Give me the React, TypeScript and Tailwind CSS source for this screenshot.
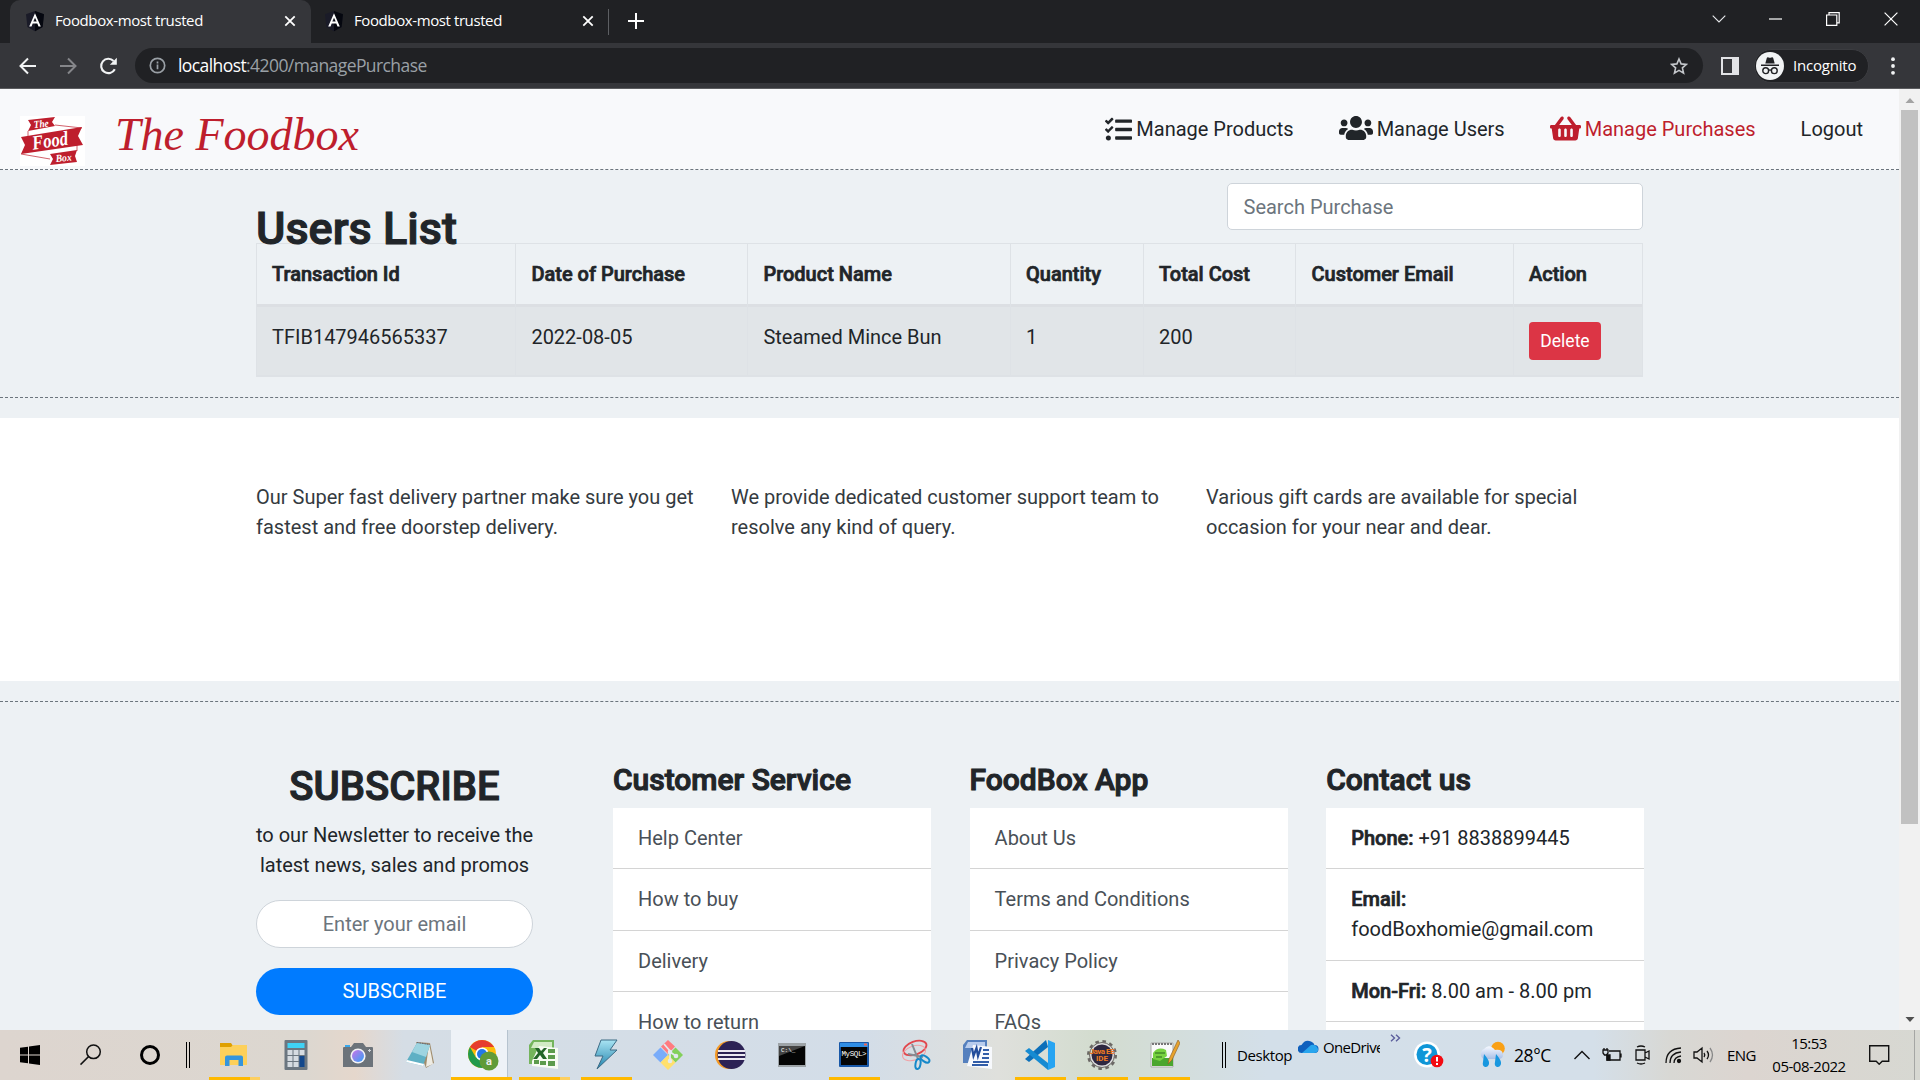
import React from "react";
import { FaTasks, FaUsers, FaShoppingBasket } from "react-icons/fa";

const navCls = "flex items-center whitespace-nowrap text-[20px] leading-[30px]";

function Tab({ active }: { active?: boolean }) {
  return (
    <div className={active
      ? "relative ml-[10px] flex h-[43px] w-[301px] shrink-0 items-center rounded-t-[10px] bg-[#35363a] pb-[2px] pl-[15px] pr-[15px]"
      : "relative flex h-[43px] w-[297px] shrink-0 items-center pb-[2px] pl-[13px] pr-[14px]"}>
      <svg width="20" height="22" viewBox="0 0 20 22" className="shrink-0">
        <path d="M10 1 19 4.3 17.6 17 10 21.3 2.4 17 1 4.3z" fill="#1a1b28" />
        <path d="M10 1 19 4.3 17.6 17 10 21.3z" fill="#05070f" />
        <path d="M10 3.2 4.2 16.4h2.3l1.2-2.9h4.6l1.2 2.9h2.3zm0 4.5 1.7 3.9H8.3z" fill="#fff" />
      </svg>
      <span className="ml-[10px] whitespace-nowrap font-['Open_Sans','Noto_Sans',sans-serif] text-[15px] tracking-[-0.4px] text-white">Foodbox-most trusted</span>
      <svg width="12" height="12" viewBox="0 0 12 12" className="ml-auto" stroke="#fff" strokeWidth="1.8"><path d="M1.3 1.3l9.4 9.4M10.7 1.3l-9.4 9.4" /></svg>
    </div>
  );
}

function Browser() {
  return (
    <header className="h-[89px] border-b border-[#5b5c5f] bg-[#35363a]">
      <div className="flex h-[43px] items-center bg-[#202124]">
        <Tab active />
        <Tab />
        <div className="h-[26px] w-px bg-[#5d5f63]" />
        <svg width="16" height="16" viewBox="0 0 16 16" className="ml-[19px] mb-[1px]" stroke="#fff" strokeWidth="2"><path d="M8 0v16M0 8h16" /></svg>
        <div className="ml-auto flex items-center pr-[22px] pb-[5px]">
          <svg width="14" height="8" viewBox="0 0 14 8" fill="none" stroke="#e8eaed" strokeWidth="1.1"><path d="M.7.7 7 7 13.3.7" /></svg>
          <svg width="13" height="2" viewBox="0 0 13 2" className="ml-[43px]"><path d="M0 1h13" stroke="#fff" strokeWidth="1.2" /></svg>
          <svg width="14" height="14" viewBox="0 0 14 14" className="ml-[44px]" fill="none" stroke="#fff" strokeWidth="1.2"><path d="M.6 3h10.2v10.4H.6zM3 3V.7h10.2v10.1h-2.4" /></svg>
          <svg width="14" height="14" viewBox="0 0 14 14" className="ml-[44px]" stroke="#fff" strokeWidth="1.2"><path d="M.6.6l12.8 12.8M13.4.6.6 13.4" /></svg>
        </div>
      </div>
      <div className="flex h-[45px] items-center">
        <svg width="18" height="18" viewBox="0 0 18 18" className="ml-[19px]" fill="none" stroke="#f1f3f4" strokeWidth="2"><path d="M17 9H2M9 1.5 1.5 9 9 16.5" /></svg>
        <svg width="18" height="18" viewBox="0 0 18 18" className="ml-[22px]" fill="none" stroke="#85868a" strokeWidth="2"><path d="M1 9h15M9 1.5 16.5 9 9 16.5" /></svg>
        <svg width="19" height="18" viewBox="0 0 19 18" className="ml-[22px]" fill="none" stroke="#f1f3f4" strokeWidth="2.1"><path d="M15.8 12.2A7.2 7.2 0 1 1 14.6 4" /><path d="M17.8.8v7h-7z" fill="#f1f3f4" stroke="none" /></svg>
        <div className="ml-[17px] flex h-[35px] w-[1568px] items-center rounded-full bg-[#202124] pl-[14px] pr-[15px]">
          <svg width="17" height="17" viewBox="0 0 17 17" fill="none" stroke="#9aa0a6" strokeWidth="1.7"><circle cx="8.5" cy="8.5" r="7.2" /><path d="M8.5 7.6v4.7M8.5 4.6v1.8" /></svg>
          <span className="ml-[12px] whitespace-nowrap font-['Open_Sans','Noto_Sans',sans-serif] text-[17.5px] tracking-[-0.58px] text-[#9aa0a6]"><span className="text-white">localhost</span>:4200/managePurchase</span>
          <svg width="18" height="18" viewBox="0 0 24 24" className="ml-auto" fill="none" stroke="#c4c7cb" strokeWidth="2.1"><path d="m12 2.6 2.8 6.6 7.1.6-5.4 4.7 1.6 7L12 17.8l-6.100 3.700 1.600-7L2.100 9.800l7.100-.6z" /></svg>
        </div>
        <div className="ml-[18px] flex h-[18px] w-[18px] border-2 border-[#e2e3e6]"><div className="ml-auto w-[5px] bg-[#e2e3e6]" /></div>
        <div className="ml-[15px] flex h-[34px] w-[115px] items-center rounded-full border border-[#3b3c40] bg-[#202124] pl-px">
          <svg width="28" height="28" viewBox="0 0 28 28"><circle cx="14" cy="14" r="14" fill="#f1f3f4" /><g fill="#202124"><path d="M9.300 11.500 10.800 6c.3-.9 1-.9 1.700-.6 1 .4 2 .4 3 0 .7-.3 1.400-.3 1.700.6l1.500 5.500zM5 12.500h18v1.500H5z" /></g><g fill="none" stroke="#202124" strokeWidth="1.400"><circle cx="9.700" cy="18.700" r="2.900" /><circle cx="18.300" cy="18.700" r="2.900" /><path d="M12.600 18.300q1.400-.9 2.800 0" /></g></svg>
          <span className="mb-[1px] ml-[9px] font-['Open_Sans',sans-serif] text-[15px] tracking-[-0.2px] text-white">Incognito</span>
        </div>
        <svg width="4" height="18" viewBox="0 0 4 18" className="ml-[22px]" fill="#f1f3f4"><circle cx="2" cy="2.200" r="1.900" /><circle cx="2" cy="9" r="1.900" /><circle cx="2" cy="15.800" r="1.900" /></svg>
      </div>
    </header>
  );
}

function Logo() {
  return (
    <svg width="65" height="50" viewBox="0 0 65 50">
      <rect width="65" height="50" fill="#fff" />
      <path d="M8 4 35 1l-3 5 3 4L8 15l3-6zM1 21 62 11l-4 9 5 9L1 38l4-9zM30 38l27-4-2 6 2 6-27 3 3-6z" fill="#be1e2d" />
      <path d="M8 15v5M35 9l27 3M1 38l29 5M57 29v6" stroke="#be1e2d" strokeWidth=".7" />
      <g fill="#fff" fontFamily="Liberation Serif, serif" fontStyle="italic" fontWeight="bold">
        <text x="14" y="12" fontSize="10.500" textLength="15" lengthAdjust="spacingAndGlyphs" transform="rotate(-5 14 12)">The</text>
        <text x="13" y="33.500" fontSize="20" textLength="36" lengthAdjust="spacingAndGlyphs" transform="rotate(-8 14 33)">Food</text>
        <text x="36" y="46" fontSize="10.500" textLength="16" lengthAdjust="spacingAndGlyphs" transform="rotate(-5 36 46)">Box</text>
      </g>
    </svg>
  );
}

const columns: [string, string, string][] = [
  ["Transaction Id", "TFIB147946565337", "w-[259.400px]"],
  ["Date of Purchase", "2022-08-05", "w-[232px]"],
  ["Product Name", "Steamed Mince Bun", "w-[262.600px]"],
  ["Quantity", "1", "w-[133px]"],
  ["Total Cost", "200", "w-[152.500px]"],
  ["Customer Email", "", "w-[217.500px]"],
  ["Action", "delete", "w-[129px]"],
];

const bold = "[-webkit-text-stroke:0.7px_#212529] font-medium text-[#212529]";
const heading = "[-webkit-text-stroke:1.1px_#212529] font-medium text-[#212529]";

function LinkColumn({ title, children }: { title: string; children: React.ReactNode }) {
  return (
    <div className="w-[318px]">
      <h4 className={`mb-[10px] h-[36px] whitespace-nowrap text-[30px] leading-[36px] ${heading}`}>{title}</h4>
      <ul className="bg-white text-[20px] leading-[30px]">{children}</ul>
    </div>
  );
}
const item = "border-b border-[#d4d4d4] pt-[15px] pb-[15.250px] pl-[25px]";

function Page() {
  return (
    <main className="flex h-[941px] overflow-hidden bg-[#edf1f4] font-[Roboto,sans-serif] text-[#212529]">
      <div className="w-[1899px] shrink-0">
        <nav className="flex h-[81px] border-b border-dashed border-[#6c757d] bg-[#f8f9fb]">
          <div className="ml-[20px] mt-[27px]"><Logo /></div>
          <svg width="250" height="60" viewBox="0 0 250 60" className="ml-[28px] mt-[15px]"><text x="2" y="46" fontFamily="'Liberation Serif', serif" fontStyle="italic" fontSize="46" fill="#be1e2d" textLength="244" lengthAdjust="spacingAndGlyphs">The Foodbox</text></svg>
          <div className="mt-[25px] ml-auto flex h-[30px] pr-[36px]">
            <a className={navCls}><FaTasks className="mr-[4px] h-[27px] w-[27px]" />Manage Products</a>
            <a className={`${navCls} ml-[45px]`}><FaUsers className="mb-[2px] mr-[4px] h-[34px] w-[34px]" />Manage Users</a>
            <a className={`${navCls} ml-[45px] text-[#be1e2d]`}><FaShoppingBasket className="mb-[2px] mr-[4px] h-[31px] w-[31px]" />Manage Purchases</a>
            <a className={`${navCls} ml-[45px]`}>Logout</a>
          </div>
        </nav>
        <section className="h-[228px] border-b border-dashed border-[#6c757d] px-[256px]">
          <div className="flex h-[73px] w-[1387px] justify-between">
            <h1 className={`mt-[32px] whitespace-nowrap text-[45px] leading-[54px] ${heading}`}>Users List</h1>
            <div className="mt-[13px] flex h-[47px] w-[416px] items-center rounded-[5px] border border-[#ced4da] bg-white pl-[15.500px] text-[20px] text-[#6c757d]">Search Purchase</div>
          </div>
          <div className="flex w-[1387px] border-r border-b-2 border-t border-[#dee2e6]">
            {columns.map(([head, value, width]) => (
              <div key={head} className={`${width} shrink-0 border-l border-[#dee2e6] text-[20px] leading-[30px]`}>
                <div className={`h-[60px] pt-[15px] pl-[15px] ${bold}`}>{head}</div>
                <div className="h-[71px] border-t-[3px] border-[#dcdfe3] bg-[#e1e5e8] pl-[15px] pt-[15px]">
                  {value === "delete" ? <button className="block h-[38px] w-[72px] rounded-[4px] bg-[#dc3545] text-[17.500px] text-white">Delete</button> : value}
                </div>
              </div>
            ))}
          </div>
        </section>
        <section className="mt-[20px] flex h-[263px] gap-[38px] bg-white pl-[256px] pt-[64px] text-[20px] leading-[30px] text-[#343a40]">
          <p className="w-[437px] whitespace-nowrap">Our Super fast delivery partner make sure you get<br />fastest and free doorstep delivery.</p>
          <p className="w-[437px] whitespace-nowrap">We provide dedicated customer support team to<br />resolve any kind of query.</p>
          <p className="w-[437px] whitespace-nowrap">Various gift cards are available for special<br />occasion for your near and dear.</p>
        </section>
        <div className="h-[21px] border-b border-dashed border-[#6c757d]" />
        <footer className="flex pl-[256px] pt-[60px]">
          <div className="mr-[80px] w-[277px] text-center text-[20px] leading-[30px]">
            <h2 className={`mt-[1px] text-[40px] leading-[48px] ${heading}`}>SUBSCRIBE</h2>
            <p className="mt-[9px] whitespace-nowrap">to our Newsletter to receive the<br />latest news, sales and promos</p>
            <div className="mt-[20px] flex h-[48px] items-center justify-center rounded-full border border-[#ced4da] bg-white text-[#6c757d]">Enter your email</div>
            <button className="mt-[20px] h-[47px] w-full rounded-full bg-[#007bff] pb-[1px] text-white">SUBSCRIBE</button>
          </div>
          <div className="flex gap-[38.600px] text-[#495057]">
            <LinkColumn title="Customer Service"><li className={item}>Help Center</li><li className={item}>How to buy</li><li className={item}>Delivery</li><li className={item}>How to return</li></LinkColumn>
            <LinkColumn title="FoodBox App"><li className={item}>About Us</li><li className={item}>Terms and Conditions</li><li className={item}>Privacy Policy</li><li className={item}>FAQs</li></LinkColumn>
            <LinkColumn title="Contact us">
              <li className={`${item} text-[#212529]`}><b className={bold}>Phone:</b> +91 8838899445</li>
              <li className={`${item} text-[#212529]`}><b className={bold}>Email:</b><br />foodBoxhomie@gmail.com</li>
              <li className={`${item} text-[#212529]`}><b className={bold}>Mon-Fri:</b> 8.00 am - 8.00 pm</li>
              <li className="h-[61px]" />
            </LinkColumn>
          </div>
        </footer>
      </div>
      <div className="flex h-full w-[21px] shrink-0 flex-col items-center bg-[#f1f1f1]">
        <svg width="20" height="21" viewBox="0 0 20 21"><path d="M10 9l4.500 5h-9z" fill="#a3a3a3" /></svg>
        <div className="h-[714px] w-[17px] bg-[#c1c1c1]" />
        <svg width="20" height="21" viewBox="0 0 20 21" className="mt-auto"><path d="M10 13l-4.500-5h9z" fill="#505050" /></svg>
      </div>
    </main>
  );
}

function Icon({ children }: { children: React.ReactNode }) {
  return <svg width="32" height="32" viewBox="0 0 32 32">{children}</svg>;
}

const apps: { id: string; on?: boolean; multi?: boolean; active?: boolean; art: React.ReactNode }[] = [
  { id: "explorer", on: true, multi: true, art: <><path d="M2 4h11l2 3h13v4H2z" fill="#dfa000" /><path d="M2 8h11l2-2h14v20H2z" fill="#fdd05a" /><path d="M7 27V18.500q0-2 2-2h14q2 0 2 2V27h-4.500v-6h-9v6z" fill="#3595dc" /></> },
  { id: "calc", art: <><rect x="4.500" y="1" width="23" height="30" rx="1" fill="#6b7680" /><rect x="7.500" y="4" width="17" height="5" fill="#3fd2f5" /><path d="M7.500 11h5v5h-5zm6 0h5v5h-5zm6 0h5v5h-5zm-12 6h5v5h-5zm6 0h5v5h-5zm-6 6h5v5h-5zm6 0h5v5h-5z" fill="#d5dbe1" /><path d="M19.500 17h5v11h-5z" fill="#12478c" /></> },
  { id: "camera", art: <><defs><linearGradient id="lens" x2="1" y2="1"><stop stopColor="#cb74e8" /><stop offset="1" stopColor="#35a0f5" /></linearGradient></defs><path d="M3 6h5v3H3z" fill="#39a8ec" /><path d="M1 9q0-1 1-1h7l3-4h9l3 4h6q1 0 1 1v19H1z" fill="#6c737a" /><circle cx="16" cy="17" r="7.600" fill="#f3f3f5" /><circle cx="16" cy="17" r="6" fill="url(#lens)" /><path d="M27.500 10v3M26 11.500h3" stroke="#cfd3d8" /></> },
  { id: "notepad", art: <><path d="M12 3 26 4l4 20-8 5z" fill="#a08c6c" /><path d="M25 4l4 21-7 3z" fill="#eeece4" /><path d="M13 4l13 2-7 21L2 23z" fill="#5fb0c4" /><path d="M13 4l13 2-4 12L8 13z" fill="#9ed4e0" /><path d="M2 23l17 4 1-2-17-4z" fill="#fff" /><path d="M13 3.500l13 2" stroke="#667" strokeDasharray="1.500 1" /></> },
  { id: "chrome", on: true, active: true, art: <><circle cx="15" cy="15" r="14" fill="#fbbc09" /><path d="M15 15 2.900 8A14 14 0 0 1 27.100 8H15z" fill="#e63d2e" /><path d="M15 15 8.900 18.500 2.900 8A14 14 0 0 0 15 29l6-10.500z" fill="#219a4c" /><circle cx="15" cy="15" r="6.600" fill="#fff" /><circle cx="15" cy="15" r="5" fill="#2378e8" /><circle cx="22" cy="22" r="9.500" fill="#609b37" /><text x="22" y="26" textAnchor="middle" fontFamily="Roboto" fontSize="11" fontWeight="bold" fill="#eee">a</text></> },
  { id: "excel", on: true, multi: true, art: <><path d="M5 1h21v24H1V6z" fill="#74b45c" /><path d="M6 3h18v6H3z" fill="#d2ebc5" /><path d="M11 7l19 2v21l-26-3V22z" fill="#f7fbf3" /><path d="M20 10h7v4h-7zm0 6h7v4h-7zm0 6h7v5h-7zm-8 0h6v4h-6zm-6-1h5v4H6z" fill="#5c9b4c" /><path d="M7 9h4l2 3 3-3h3l-4 5 4 6h-4l-3-4-3 4H5l5-6z" fill="#236528" /></> },
  { id: "bolt", on: true, art: <><defs><linearGradient id="bolt" x2="0" y2="1"><stop stopColor="#a9e4f3" /><stop offset="1" stopColor="#2183ad" /></linearGradient></defs><path d="M11 1h16l-7 10h7L7 30l6-13H5z" fill="url(#bolt)" stroke="#3d6b85" /></> },
  { id: "git", art: <><path d="M16 1l7 6.500-7 7.500-7-7.500z" fill="#ff7b80" /><path d="M8.500 8.500 16 16l-7.500 7.500L1 16z" fill="#79acfa" /><path d="M23.500 8.500 31 16l-7.500 7.500L16 16z" fill="#83d05b" /><path d="M16 16l7.500 7.500L16 31l-7.500-7.500z" fill="#ffe06d" /><path d="M12 5l6 7v10M18 13l6 4" fill="none" stroke="#e3e9ef" strokeWidth="1.800" /><circle cx="18" cy="13" r="2.300" fill="#e3e9ef" /><circle cx="18" cy="22" r="2.300" fill="#e3e9ef" /><circle cx="24" cy="17" r="2.300" fill="#e3e9ef" /></> },
  { id: "eclipse", art: <><circle cx="15" cy="16" r="14" fill="#f59a25" /><circle cx="17.500" cy="16" r="14" fill="#2c2255" /><path d="M4 12h27M4 16h27M4 20h27" stroke="#eceaf3" strokeWidth="2" /></> },
  { id: "cmd", art: <><path d="M2 4h28v24H2z" fill="#9da3a7" /><path d="M3 7h26v19H3z" fill="#050505" /><path d="M3 7h26L3 17z" fill="#444" /><text x="5" y="13" fontFamily="Liberation Mono" fontSize="6" fill="#fff">C:\_</text></> },
  { id: "mysql", on: true, art: <><rect x="1" y="3" width="30" height="25" rx="1" fill="#1858a8" /><path d="M2 4h28v4H2z" fill="#2f8de4" /><path d="M26 4.500h3v2h-3z" fill="#ef6351" /><path d="M3 8h26v18H3z" fill="#050505" /><text x="3.500" y="16.500" fontFamily="Liberation Mono" fontSize="7.500" textLength="25" fill="#fff">MySQL&gt;</text></> },
  { id: "snip", art: <><g fill="none"><ellipse cx="15" cy="9" rx="12" ry="6.500" transform="rotate(-20 15 9)" stroke="#e2474d" strokeWidth="1.800" /><ellipse cx="14" cy="14" rx="12" ry="7" transform="rotate(-20 14 14)" stroke="#f1a0a4" /><path d="M12 5l6 15M8 15l15 3" stroke="#858d94" strokeWidth="2" /><ellipse cx="18" cy="25" rx="2.500" ry="5" transform="rotate(10 18 25)" stroke="#1688c9" strokeWidth="2" /><ellipse cx="25" cy="20" rx="5" ry="2.600" transform="rotate(35 25 20)" stroke="#1688c9" strokeWidth="2" /></g></> },
  { id: "word", art: <><path d="M5 1h20v23H1V6z" fill="#5580be" /><path d="M6 3h17v6H3z" fill="#b8cced" /><path d="M11 6l19 2v22L5 27z" fill="#f7f9fd" /><path d="M21 11h6M21 15h6M20 19h7M11 23h16M10 26h16" stroke="#315da8" strokeWidth="1.800" /><path d="M10 9l1.500 8 3-8 1.500 8 3-9" fill="none" stroke="#234d9b" strokeWidth="2.200" /></> },
  { id: "code", on: true, art: <><path d="M24 1l7 3v24l-7 3z" fill="#26a4f2" /><path d="M1 20 22 1l2 7L5 23z" fill="#0d70ba" /><path d="M1 12l4-3 19 15v7z" fill="#168bd2" /></> },
  { id: "jee", on: true, art: <><circle cx="16" cy="16" r="13.500" fill="none" stroke="#6b6865" strokeWidth="3" strokeDasharray="3.500 3.570" /><circle cx="16" cy="16" r="12.500" fill="#ddd" stroke="#6b6865" strokeWidth="1" /><circle cx="16" cy="16" r="10.500" fill="#2e2740" /><text x="16" y="15" textAnchor="middle" textLength="25" fontFamily="Roboto" fontSize="8" fontWeight="bold" fill="#f07b20">Java EE</text><text x="16" y="22" textAnchor="middle" fontFamily="Roboto" fontSize="8" fontWeight="bold" fill="#f07b20">IDE</text></> },
  { id: "npp", on: true, art: <><path d="M3 4h22v24H3z" fill="#fafafa" stroke="#aaa" /><path d="M4 5h20" stroke="#777" strokeWidth="2" strokeDasharray="2 1" /><path d="M4 19h21v8H4z" fill="#4aa62e" /><path d="M5 14q5-7 13-3l1 6-7 5-7-2z" fill="#78d241" /><path d="M7 14h10M8 18h6" stroke="#27681b" /><path d="M30 1 21 20l-1 5 4-4 8-17z" fill="#e8a32c" stroke="#845a2a" strokeWidth=".6" /></> },
];

function Taskbar() {
  return (
    <footer className="flex h-[50px] items-center overflow-hidden bg-[linear-gradient(90deg,#ddd5cf_0%,#dcd7d0_16%,#e5d7cc_18.500%,#d5dde5_21%,#d3dde8_45%,#dfe0dc_52%,#d3dccf_57%,#d3dfe9_66%,#d4dfe9_83%,#d8d8d4_87%,#dcd5d0_91%,#d7d8d2_100%)] font-['Open_Sans','Noto_Sans',sans-serif] text-black">
      <svg width="20" height="20" viewBox="0 0 20 20" className="ml-[20px]"><path d="M0 2.800 8 1.700V9.500H0zM9 1.500 20 0v9.500H9zM0 10.500h8v7.800L0 17.200zM9 10.500h11V20L9 18.500z" /></svg>
      <svg width="22" height="22" viewBox="0 0 22 22" className="ml-[40px]" fill="none" stroke="#111" strokeWidth="1.500"><circle cx="13.500" cy="7.800" r="6.800" /><path d="M8.500 12.600.500 20.600" /></svg>
      <div className="ml-[38px] h-[20px] w-[20px] rounded-full border-[3px] border-black" />
      <div className="ml-[26px] h-[26px] w-[4px] border-x border-black" />
      <div className="ml-[13px] flex h-full">
        {apps.map((app) => (
          <div key={app.id} className={app.active ? "flex h-full w-[62px] flex-col" : "flex h-full w-[62px] flex-col items-center"}>
            <div className={app.active ? "flex h-[47px] w-[57px] items-center justify-center border-r border-[#b6c3cf] bg-[#eef2f7] pl-[7px] pt-[3px]" : "flex h-[47px] items-center pt-[3px]"}><Icon>{app.art}</Icon></div>
            {app.on && <div className={app.active ? "flex h-[3px] w-[61px] bg-[#ffb900]" : "flex h-[3px] w-[51px] bg-[#ffb900]"}>{app.multi && <div className="ml-auto w-[10px] bg-[#fdcf60]" />}</div>}
          </div>
        ))}
      </div>
      <div className="ml-[27px] h-[26px] w-[4px] shrink-0 border-x border-black" />
      <span className="ml-[11px] w-[61px] text-[15px] tracking-[-0.4px]">Desktop</span>
      <svg width="21" height="14" viewBox="0 0 21 14" className="mb-[17px] shrink-0"><path d="M4 13a4 4 0 0 1-.5-8Q7-1 13 1.500q3 1 3.500 3.500 4 0 4 4t-4 4z" fill="#0f60bd" /><path d="M4 13 13 5q4-1 6 2 1.500 2 1 3.500-1 2.500-4 2.500z" fill="#29a5ed" /></svg>
      <span className="mb-[16px] ml-[4px] w-[57px] overflow-hidden whitespace-nowrap text-[15px] tracking-[-0.65px]">OneDrive</span>
      <svg width="11" height="8" viewBox="0 0 11 8" className="mb-[34px] ml-[10px]" fill="none" stroke="#5b5e9c" strokeWidth="1.400"><path d="M1 .7 4.500 4 1 7.300M6 .7 9.500 4 6 7.300" /></svg>
      <svg width="30" height="28" viewBox="0 0 30 28" className="ml-[13px] shrink-0"><circle cx="13" cy="13.500" r="13" fill="#fff" /><circle cx="13" cy="13.500" r="10.500" fill="#1096d7" /><text x="13" y="21" textAnchor="middle" fontFamily="Open Sans" fontSize="20" fontWeight="bold" fill="#fff">?</text><circle cx="23" cy="20" r="6.300" fill="#f30b12" /><path d="M23 16v4.500M23 22v2" stroke="#fff" strokeWidth="2" /></svg>
      <svg width="28" height="28" viewBox="0 0 28 28" className="ml-[34px] shrink-0"><defs><linearGradient id="cloud" x2="0" y2="1"><stop stopColor="#f6f9ff" /><stop offset="1" stopColor="#a9bfe6" /></linearGradient></defs><circle cx="20" cy="7.500" r="6.800" fill="#f9a015" /><path d="M6 18a5.500 5.500 0 0 1 0-10q5-6 11 1 8-1 8 5 0 4-5 4z" fill="url(#cloud)" /><path d="M6 13q6 7 5 10-1 3.500-4 3-3-1-2-5zM18 13q6 7 5 10-1 3.500-4 3-3-1-2-5z" fill="#1897df" /></svg>
      <span className="ml-[8px] w-[40px] text-[17.500px] tracking-[-0.4px]">28°C</span>
      <svg width="16" height="10" viewBox="0 0 16 10" className="ml-[20px] shrink-0" fill="none" stroke="#111" strokeWidth="1.400"><path d="M.5 9 8 1.500 15.500 9" /></svg>
      <svg width="20" height="14" viewBox="0 0 20 14" className="ml-[12px] shrink-0" fill="none" stroke="#111" strokeWidth="1.300"><path d="M7 3h11v9H5V7M19 5.500v4M1 2h5v3L4.500 7h-2L1 5zM2 0v2M5 0v2" /><path d="M5 7h3v5H5z" fill="#111" /></svg>
      <svg width="16" height="20" viewBox="0 0 16 20" className="ml-[13px] shrink-0" fill="none" stroke="#111" strokeWidth="1.300"><path d="M1 5h9v10H1zM10 8l4-2v8l-4-2M2 2q4-2 8 0M2 18q4 2 8 0" /></svg>
      <svg width="17" height="17" viewBox="0 0 17 17" className="ml-[14px] shrink-0" fill="none" stroke="#111" strokeWidth="1.300"><path d="M1 16Q1 2 16 1M5 16Q5 6 16 5M9 16Q9 10 16 9" /><circle cx="14" cy="14" r="1.500" fill="#111" /></svg>
      <svg width="21" height="18" viewBox="0 0 21 18" className="ml-[11px] shrink-0" fill="none" stroke="#111" strokeWidth="1.300"><path d="M1 6h3l5-4v14l-5-4H1zM11 7q1.500 2 0 4M14 5q3 4 0 8" /><path d="M17 2q5 7 0 14" stroke="#888" /></svg>
      <span className="ml-[13px] w-[30px] text-[15px] tracking-[-0.6px]">ENG</span>
      <div className="ml-[12px] w-[80px] whitespace-nowrap text-center text-[15px] leading-[23px] tracking-[-0.5px]">15:53<br />05-08-2022</div>
      <svg width="21" height="20" viewBox="0 0 21 20" className="ml-[20px] shrink-0" fill="none" stroke="#111" strokeWidth="1.400"><path d="M.7.7h19v15.500h-6.500l-3 3-3-3H.7z" /></svg>
      <div className="ml-auto mr-[5px] h-full w-px bg-[#a5a6a4]" />
    </footer>
  );
}

export default function App() {
  return (
    <div className="h-[1080px] w-[1920px] overflow-hidden">
      <Browser />
      <Page />
      <Taskbar />
    </div>
  );
}
